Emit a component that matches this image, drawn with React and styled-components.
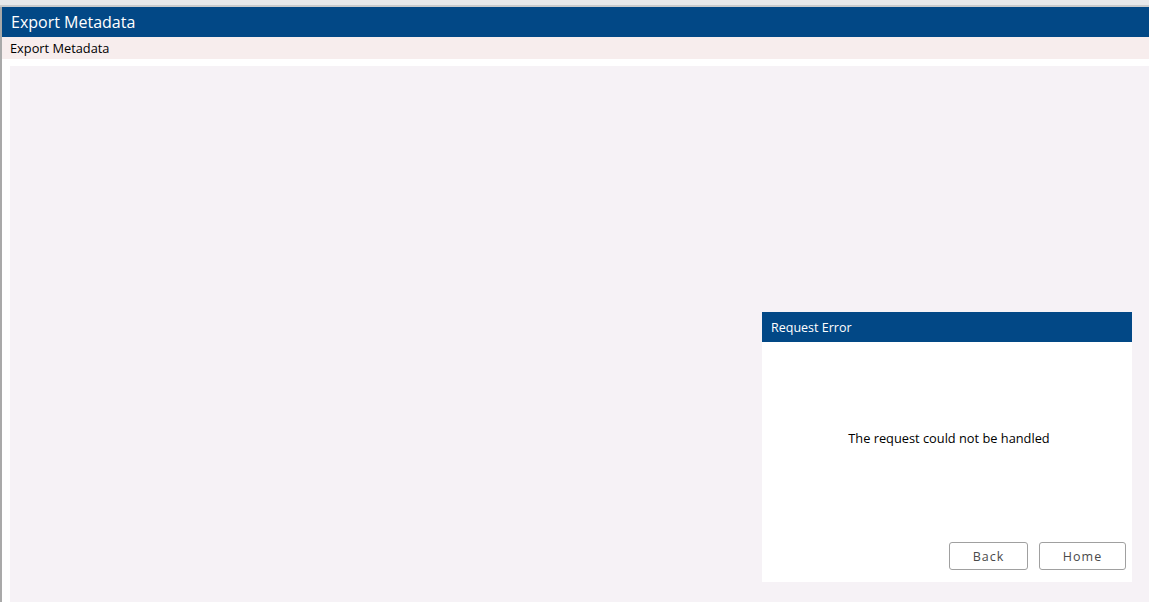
import React from "react";
import { styled, createGlobalStyle } from "styled-components";

const GlobalStyle = createGlobalStyle`
  html, body {
    margin: 0;
    padding: 0;
    height: 100%;
    overflow: hidden;
  }
  body {
    font-family: "Open Sans", "Noto Sans", sans-serif;
    background: #ffffff;
  }
  #root {
    height: 100%;
  }
`;

const Window = styled.div`
  height: 100vh;
  display: flex;
  flex-direction: column;
  position: relative;
  box-sizing: border-box;
  border-left: 2px solid #a9a9a9;
`;

const TopStrip = styled.div`
  height: 5px;
  flex-shrink: 0;
  background: #e7e8ea;
  border-bottom: 2px solid #c9cbcd;
  margin-left: -2px;
`;

const TitleBar = styled.header`
  height: 30px;
  flex-shrink: 0;
  display: flex;
  align-items: center;
  padding-left: 9px;
  background: #024886;
  color: #ffffff;
  font-size: 16px;
`;

const Breadcrumb = styled.div`
  height: 22px;
  flex-shrink: 0;
  display: flex;
  align-items: center;
  padding-left: 8px;
  background: #f7eded;
  color: #000000;
  font-size: 12.8px;
`;

const Workspace = styled.main`
  flex: 1;
  margin-top: 7px;
  margin-left: 8px;
  background: #f6f2f6;
`;

const Dialog = styled.section`
  position: absolute;
  right: 17px;
  bottom: 20px;
  width: 370px;
  height: 270px;
  display: flex;
  flex-direction: column;
  background: #ffffff;
`;

const DialogHeader = styled.div`
  height: 30px;
  flex-shrink: 0;
  display: flex;
  align-items: center;
  padding-left: 9px;
  background: #024886;
  color: #ffffff;
  font-size: 12.5px;
`;

const DialogBody = styled.div`
  flex: 1;
  display: flex;
  align-items: center;
  justify-content: center;
  font-size: 12.8px;
  color: #000000;
  padding: 0 0 8px 4px;
`;

const DialogFooter = styled.div`
  display: flex;
  justify-content: flex-end;
  gap: 11px;
  padding: 0 6px 12px 0;
`;

const Button = styled.button`
  height: 28px;
  width: ${(p) => p.$width}px;
  box-sizing: border-box;
  border: 1px solid #a0a0a0;
  border-radius: 3px;
  background: #ffffff;
  color: #4a4a4a;
  font-family: inherit;
  font-size: 12.5px;
  letter-spacing: 1px;
  cursor: pointer;
`;

export default function App() {
  return (
    <>
      <GlobalStyle />
      <Window>
        <TopStrip />
        <TitleBar>Export Metadata</TitleBar>
        <Breadcrumb>Export Metadata</Breadcrumb>
        <Workspace />
        <Dialog>
          <DialogHeader>Request Error</DialogHeader>
          <DialogBody>The request could not be handled</DialogBody>
          <DialogFooter>
            <Button $width={79}>Back</Button>
            <Button $width={87}>Home</Button>
          </DialogFooter>
        </Dialog>
      </Window>
    </>
  );
}
